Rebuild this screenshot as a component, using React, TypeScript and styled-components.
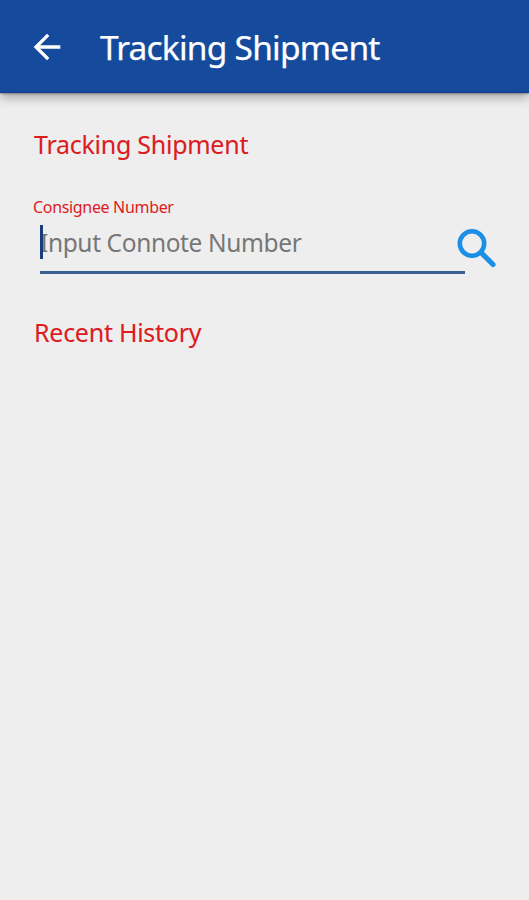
import React from "react";
import styled, { createGlobalStyle } from "styled-components";

const GlobalStyle = createGlobalStyle`
  * { box-sizing: border-box; }
  html, body { margin: 0; background: #eeeeee; }
  body {
    font-family: "Noto Sans", "Open Sans", sans-serif;
    overflow: hidden;
  }
`;

const Screen = styled.div`
  display: flex;
  flex-direction: column;
  min-height: 900px;
  background: #eeeeee;
`;

const AppBar = styled.header`
  display: flex;
  align-items: center;
  height: 93px;
  padding: 2px 0 0 27px;
  background: #154a9c;
  border-bottom: 1px solid #103f91;
  box-shadow: 0 5px 10px rgba(0, 0, 0, 0.28), 0 1px 2px rgba(0, 0, 0, 0.3);
`;

const BackButton = styled.button`
  display: flex;
  padding: 0;
  border: 0;
  background: none;
  color: #fff;
`;

const Title = styled.h1`
  margin: 0 0 0 33px;
  color: #fff;
  font-size: 33.5px;
  font-weight: 400;
  line-height: 46px;
  letter-spacing: -0.78px;
  white-space: nowrap;
  -webkit-text-stroke: 0.25px currentColor;
`;

const Content = styled.main`
  display: flex;
  flex-direction: column;
  padding: 33px 32px 0 33px;
`;

const SectionTitle = styled.h2`
  margin: 0 0 0 1px;
  color: #dc1c1f;
  font-size: 25px;
  font-weight: 400;
  line-height: 36px;
  letter-spacing: -0.26px;
  white-space: nowrap;
  -webkit-text-stroke: 0.1px currentColor;
`;

const SearchForm = styled.div`
  display: flex;
  justify-content: space-between;
  height: 79px;
  margin: 33px 0 40px;
`;

const Field = styled.div`
  display: flex;
  flex: none;
  flex-direction: column;
  width: 432px;
`;

const Label = styled.label`
  color: #dc1c1f;
  font-size: 16px;
  line-height: 24px;
  letter-spacing: -0.33px;
`;

const InputRow = styled.div`
  position: relative;
  width: 425px;
  height: 53px;
  margin: 2px 0 0 7px;
  padding-top: 4px;
  border-bottom: 3px solid #3a5f90;
`;

const Input = styled.input`
  display: block;
  width: 100%;
  height: 36px;
  padding: 0;
  border: 0;
  outline: 0;
  background: none;
  font: 400 24.5px/36px "Noto Sans", "Open Sans", sans-serif;
  letter-spacing: -0.38px;
  &::placeholder { color: #777777; opacity: 1; }
`;

const Caret = styled.span`
  position: absolute;
  left: 0;
  top: 4px;
  width: 3px;
  height: 34px;
  background: #173f7c;
`;

const SearchButton = styled.button`
  display: flex;
  flex: none;
  align-self: flex-start;
  margin: 32px 0 0 -9px;
  padding: 0;
  border: 0;
  background: none;
`;

export default function App() {
  return (
    <>
      <GlobalStyle />
      <Screen>
        <AppBar>
          <BackButton aria-label="Back">
            <svg width="40" height="40" viewBox="0 0 24 24" fill="currentColor">
              <path d="M20 11H7.83l5.59-5.59L12 4l-8 8 8 8 1.41-1.41L7.83 13H20v-2z" />
            </svg>
          </BackButton>
          <Title>Tracking Shipment</Title>
        </AppBar>
        <Content>
          <SectionTitle>Tracking Shipment</SectionTitle>
          <SearchForm>
            <Field>
              <Label htmlFor="connote">Consignee Number</Label>
              <InputRow>
                <Input id="connote" placeholder="Input Connote Number" />
                <Caret />
              </InputRow>
            </Field>
            <SearchButton aria-label="Search">
              <svg width="41" height="41" viewBox="0 0 41 41" fill="none" stroke="#1b8fe6">
                <circle cx="16" cy="16.5" r="12.2" strokeWidth="4.6" />
                <path d="M25.5 26 37 37.5" strokeWidth="5.2" strokeLinecap="round" />
              </svg>
            </SearchButton>
          </SearchForm>
          <SectionTitle>Recent History</SectionTitle>
        </Content>
      </Screen>
    </>
  );
}
